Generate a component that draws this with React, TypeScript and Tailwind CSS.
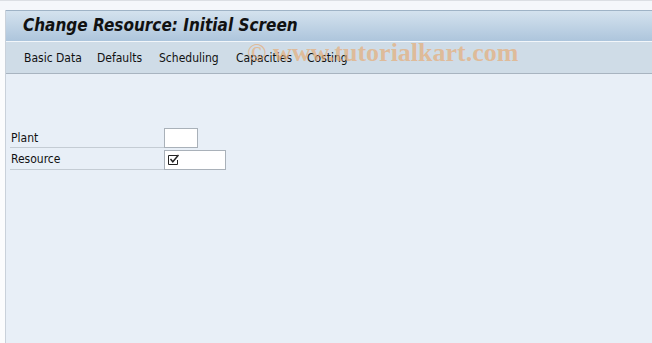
import React from "react";

const tabs = [
  { label: "Basic Data", w: "w-[73px]" },
  { label: "Defaults", w: "w-[62px]" },
  { label: "Scheduling", w: "w-[77px]" },
  { label: "Capacities", w: "w-[71px]" },
  { label: "Costing", w: "w-[60px]" },
];

export default function App() {
  return (
    <div className="w-[652px] h-[343px] overflow-hidden bg-[#f4f6fa] flex flex-col" style={{ fontFamily: "'DejaVu Sans', sans-serif" }}>
      <div className="h-[10px] shrink-0 border-t border-[#dcdfe4] bg-[#f5f7fb]" />
      <div className="flex flex-1 min-h-0">
        <div className="w-[6px] shrink-0 bg-[#fbfcfd] border-r border-[#c9d1da]" />
        <div className="flex-1 flex flex-col bg-[#e8eff7] relative">
          <div className="h-[31px] shrink-0 bg-gradient-to-b from-[#d4e2ee] to-[#adc5dc] border-t border-[#9fb3c6] flex items-center pl-[17px]">
            <span className="text-[17px] font-bold italic text-[#111]" style={{ fontFamily: "'DejaVu Sans Condensed', 'DejaVu Sans', sans-serif" }}>
              Change Resource: Initial Screen
            </span>
          </div>
          <div className="h-[33px] shrink-0 bg-[#cfdce7] border-t border-[#f2f6fa] border-b border-b-[#a8b4c0] flex items-center pl-[18px] text-[12px] text-[#111]" style={{ fontFamily: "'DejaVu Sans Condensed', 'DejaVu Sans', sans-serif" }}>
            {tabs.map((t) => (
              <span key={t.label} className={`${t.w} shrink-0 whitespace-nowrap`}>
                {t.label}
              </span>
            ))}
          </div>
          <div className="absolute left-[241px] top-[23px] text-[26px] font-bold text-[#e6ad78]/70 whitespace-nowrap pointer-events-none" style={{ fontFamily: "'Liberation Serif', serif" }}>
            © www.tutorialkart.com
          </div>
          <div className="pt-[52px] pl-[4px] flex flex-col text-[12px] text-[#111]" style={{ fontFamily: "'DejaVu Sans Condensed', 'DejaVu Sans', sans-serif" }}>
            <div className="flex items-end h-[22px]">
              <div className="w-[154px] h-[20px] border-b border-[#c4ccd4] flex items-center pl-[1px]">Plant</div>
              <div className="w-[34px] h-[20px] bg-white border border-[#a9b1b9]" />
            </div>
            <div className="flex items-end h-[22px]">
              <div className="w-[154px] h-[21px] border-b border-[#c4ccd4] flex items-center pl-[1px]">Resource</div>
              <div className="w-[62px] h-[20px] bg-white border border-[#a9b1b9] flex items-center pl-[3px]">
                <svg width="12" height="12" viewBox="0 0 12 12">
                  <path d="M9.5 1.5 H0.5 V10.5 H9.5 V6" fill="none" stroke="#222" />
                  <path d="M2.5 5 L4.8 7.8 L10.5 1" fill="none" stroke="#222" strokeWidth="1.4" />
                </svg>
              </div>
            </div>
          </div>
        </div>
      </div>
    </div>
  );
}
